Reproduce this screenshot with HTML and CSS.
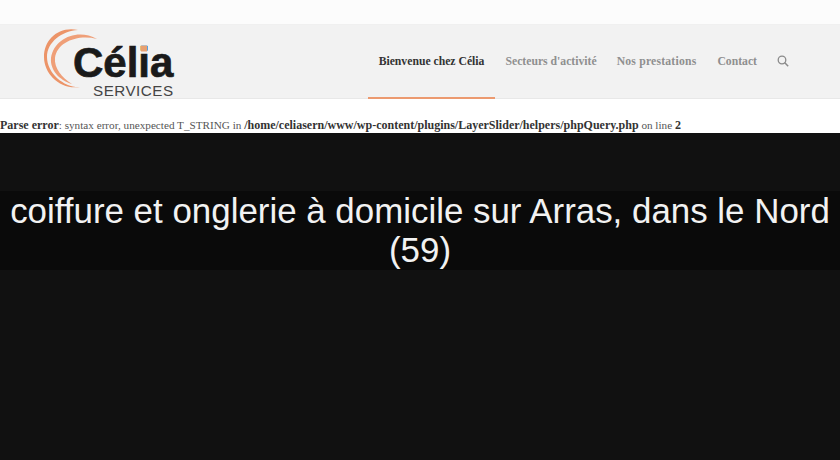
FILE: index.html
```html
<!DOCTYPE html>
<html lang="fr">
<head>
<meta charset="utf-8">
<title>Célia Services</title>
<link rel="stylesheet" href="styles.css">
</head>
<body>
<div class="topbar"></div>
<header class="header">
  <svg class="logo" width="140" height="73" viewBox="0 0 140 73" aria-label="Célia Services">
    <path d="M36 2C16 -2 2 12 2 29C2 46 18 62 38 59C23 60 5 46 5 29C5 14 20 3 36 2Z" fill="#ec9468"/>
    <path d="M55 11C36 0 12 10 9 30C8 42 17 52 30 56C20 50 12 40 13 30C15 14 36 6 55 11Z" fill="#ef9f78"/>
    <text class="logo-name" x="31" y="49">Célia</text>
    <rect x="99" y="18" width="6" height="5.5" fill="#e8a070"/>
    <text class="logo-sub" x="51" y="67.5">SERVICES</text>
  </svg>
  <nav class="nav">
    <a class="nav-item active">Bienvenue chez Célia</a>
    <a class="nav-item">Secteurs d'activité</a>
    <a class="nav-item wide">Nos prestations</a>
    <a class="nav-item">Contact</a>
    <a class="nav-item search">
      <svg width="12" height="12" viewBox="0 0 12 12"><circle cx="5" cy="5" r="3.8" fill="none" stroke="#8a8a8a" stroke-width="1.3"/><path d="M7.8 7.8L11.2 11.2" stroke="#8a8a8a" stroke-width="1.5"/></svg>
    </a>
  </nav>
</header>
<p class="error"><b>Parse error</b>: syntax error, unexpected T_STRING in <b>/home/celiasern/www/wp-content/plugins/LayerSlider/helpers/phpQuery.php</b> on line <b>2</b></p>
<main class="hero">
  <h1 class="title">coiffure et onglerie à domicile sur Arras, dans le Nord (59)</h1>
</main>
</body>
</html>
```
FILE: styles.css
```css
html, body { margin: 0; padding: 0; height: 100%; overflow: hidden; background: #fff; }
body { display: flex; flex-direction: column; font-family: "Liberation Serif", serif; }
.topbar { height: 25px; background: #fcfcfc; border-bottom: 1px solid #f0f0f0; box-sizing: border-box; }
.header { height: 74px; box-sizing: border-box; background: #f2f2f2; border-bottom: 1px solid #e8e8e8; display: flex; justify-content: space-between; padding: 0 51px 0 42px; }
.logo { display: block; margin-top: 3px; flex: none; }
.logo-name { font: 700 42px "Liberation Sans", sans-serif; fill: #1a1a1a; stroke: #1a1a1a; stroke-width: 0.7px; }
.logo-sub { font: 400 15.2px "Liberation Sans", sans-serif; fill: #444; letter-spacing: 0.5px; }
.nav { display: flex; }
.nav-item { display: flex; align-items: center; padding: 0 10px; font-size: 11.7px; font-weight: 700; color: #8f8f8f; margin-bottom: -1px; border-bottom: 2px solid transparent; box-sizing: border-box; white-space: nowrap; }
.nav-item.active { color: #333; border-bottom-color: #ec9a70; padding: 0 11px; }
.nav-item.wide { letter-spacing: 0.2px; padding-right: 11px; }
.nav-item.search { padding: 0 0 0 10px; }
.error { margin: 0; height: 34px; padding-top: 18px; box-sizing: border-box; font-size: 11.2px; line-height: 16px; color: #555; white-space: nowrap; }
.error b { color: #333; font-size: 12px; }
.hero { flex: 1; background: #111; padding-top: 58px; }
.title { margin: 0; padding-bottom: 1px; background: #0a0a0a; color: #f2f2f2; font: 400 34.9px/39px "Liberation Sans", sans-serif; text-align: center; }
```
